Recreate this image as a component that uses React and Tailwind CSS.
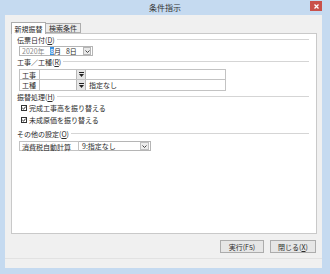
import React from 'react';

function GroupLabel({ children }) {
  return (
    <div className="flex items-center h-[10px] pl-[5px] pr-[7px] gap-[2px]">
      <span className="whitespace-nowrap">{children}</span>
      <div className="flex-1 h-[2px] border-t border-[#d5d5d5] border-b border-b-white" />
    </div>
  );
}

function ListButton() {
  return (
    <div className="w-[10px] h-full bg-[#e6e6e6] border-x border-[#b8b8b8] flex flex-col items-center justify-center gap-[1px]">
      <div className="w-[5px] h-px bg-[#222]" />
      <svg width="5" height="3" viewBox="0 0 5 3"><path d="M0 0h5L2.5 3z" fill="#222" /></svg>
    </div>
  );
}

function Chevron() {
  return (
    <svg width="5" height="3" viewBox="0 0 5 3"><path d="M0.5 0.5L2.5 2.5L4.5 0.5" stroke="#444" strokeWidth="1" fill="none" /></svg>
  );
}

function Check({ children }) {
  return (
    <div className="flex items-center h-[10px] pl-[9px] gap-[2px]">
      <div className="w-[6px] h-[6px] border border-[#333] bg-white flex items-center justify-center">
        <svg width="4" height="4" viewBox="0 0 4 4"><path d="M0.3 2L1.5 3.2L3.7 0.6" stroke="#111" strokeWidth="0.9" fill="none" /></svg>
      </div>
      <span>{children}</span>
    </div>
  );
}

export default function App() {
  return (
    <div className="w-[330px] h-[274px] bg-[#c5daf0] flex flex-col font-['Noto_Sans_CJK_JP','Liberation_Sans',sans-serif] text-[7px] leading-[10px] text-[#2a2a2a]">
      {/* title bar */}
      <div className="relative h-[15px] flex items-center justify-center">
        <span className="text-[8px] text-[#333] mt-[1px]">条件指示</span>
        <div className="absolute right-[8px] top-[1px] w-[12px] h-[10px] bg-[#c9514b] flex items-center justify-center">
          <svg width="5" height="5" viewBox="0 0 5 5"><path d="M0.5 0.5L4.5 4.5M4.5 0.5L0.5 4.5" stroke="#fff" strokeWidth="1.3" /></svg>
        </div>
      </div>

      {/* client */}
      <div className="ml-[5px] mr-[8px] h-[253px] bg-[#f0f0f0] flex flex-col">
        <div className="pl-[6px] pr-[5px] pt-[7px]">
          {/* tabs */}
          <div className="flex items-end h-[11px] relative z-10">
            <div className="h-[12px] w-[35px] bg-white border border-b-0 border-[#adadad] flex items-center justify-center -mb-px">
              新規振替
            </div>
            <div className="h-[10px] w-[35px] bg-[#ebebeb] border border-l-0 border-[#adadad] flex items-center justify-center">
              検索条件
            </div>
          </div>

          {/* panel */}
          <div className="h-[201px] bg-white border border-[#c9c9c9] flex flex-col">
            <div className="mt-[1px]">
              <GroupLabel>伝票日付(<u>D</u>)</GroupLabel>
            </div>

            <div className="mt-[1px] ml-[7px] w-[74px] h-[10px] border border-[#b5b5b5] flex items-center whitespace-nowrap">
              <span className="pl-[2px] w-[28px] text-[#8a8a8a]">2020年</span>
              <span className="ml-[2px] bg-[#3b8fe0] text-white leading-[8px]">8</span>
              <span>月</span>
              <span className="ml-[5px]">8日</span>
              <div className="ml-auto mr-px w-[8px] h-[8px] bg-[#e9e9e9] border border-[#b5b5b5] flex items-center justify-center">
                <Chevron />
              </div>
            </div>

            <div className="mt-px">
              <GroupLabel>工事／工種(<u>R</u>)</GroupLabel>
            </div>

            <div className="mt-[2px] ml-[7px] w-[207px] border border-[#c3c3c3] flex flex-col">
              <div className="flex h-[10px] border-b border-[#c3c3c3]">
                <div className="w-[20px] border-r border-[#c3c3c3] pl-[2px]">工事</div>
                <div className="w-[36px]" />
                <ListButton />
                <div className="flex-1" />
              </div>
              <div className="flex h-[10px]">
                <div className="w-[20px] border-r border-[#c3c3c3] pl-[2px]">工種</div>
                <div className="w-[36px]" />
                <ListButton />
                <div className="flex-1 pl-[3px]">指定なし</div>
              </div>
            </div>

            <div className="mt-[1px]">
              <GroupLabel>振替処理(<u>H</u>)</GroupLabel>
            </div>
            <div className="mt-[1px]">
              <Check>完成工事高を振り替える</Check>
            </div>
            <div className="mt-[2px]">
              <Check>未成原価を振り替える</Check>
            </div>

            <div className="mt-[4px]">
              <GroupLabel>その他の設定(<u>O</u>)</GroupLabel>
            </div>

            <div className="mt-[2px] ml-[7px] flex h-[10px]">
              <div className="w-[60px] border border-[#c3c3c3] pl-[2px]">消費税自動計算</div>
              <div className="w-[72px] border border-l-0 border-[#b5b5b5] flex items-center">
                <span className="pl-[3px]">9:指定なし</span>
                <div className="ml-auto mr-px w-[9px] h-[8px] bg-[#ececec] border border-[#c0c0c0] flex items-center justify-center">
                  <Chevron />
                </div>
              </div>
            </div>
          </div>

          {/* buttons */}
          <div className="mt-[6px] flex justify-end gap-[6px] pr-px">
            <div className="w-[44px] h-[13px] bg-[#e6e6e6] border border-[#acacac] flex items-center justify-center">
              実行(F5)
            </div>
            <div className="w-[46px] h-[13px] bg-[#e6e6e6] border border-[#acacac] flex items-center justify-center">
              閉じる(<u>X</u>)
            </div>
          </div>
        </div>

        <div className="mt-auto h-[10px] border-t border-[#e2e2e2] bg-[#f0f0f0]" />
      </div>
      <div className="flex-1" />
    </div>
  );
}
